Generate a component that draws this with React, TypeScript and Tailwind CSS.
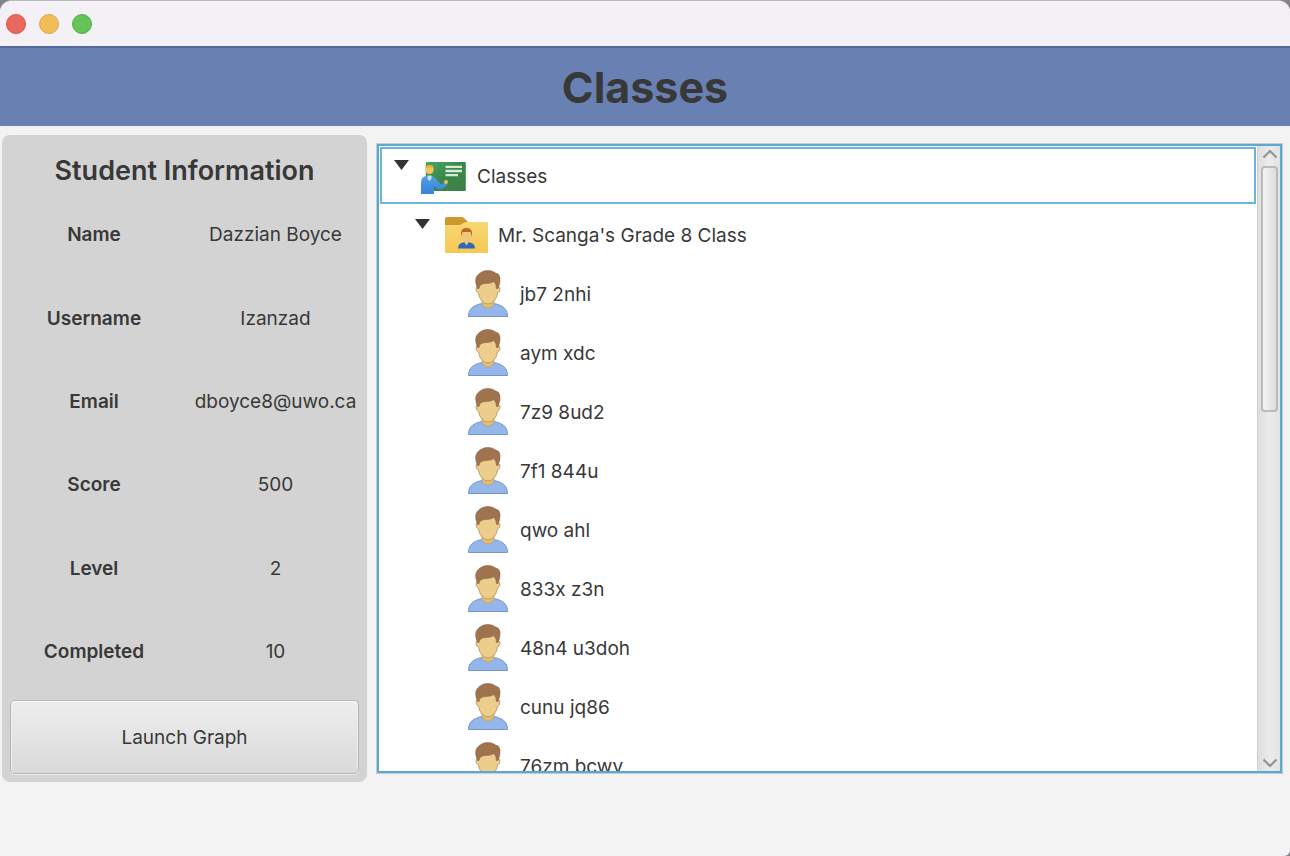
import { useRef, useState } from "react";

const details = [
  ["Name", "Dazzian Boyce"],
  ["Username", "Izanzad"],
  ["Email", "dboyce8@uwo.ca"],
  ["Score", "500"],
  ["Level", "2"],
  ["Completed", "10"],
];

const students = [
  "jb7 2nhi",
  "aym xdc",
  "7z9 8ud2",
  "7f1 844u",
  "qwo ahl",
  "833x z3n",
  "48n4 u3doh",
  "cunu jq86",
  "76zm bcwv",
];

function TeacherIcon() {
  return (
    <svg width="48" height="48" viewBox="0 0 48 48" className="shrink-0" aria-hidden="true">
      <defs>
        <linearGradient id="board" x1="0" y1="0" x2="1" y2="1">
          <stop offset="0" stopColor="#4aa766" />
          <stop offset="0.5" stopColor="#3b8649" />
          <stop offset="1" stopColor="#3d8047" />
        </linearGradient>
        <linearGradient id="shirt" x1="0" y1="0" x2="0" y2="1">
          <stop offset="0" stopColor="#4e9fdf" />
          <stop offset="1" stopColor="#3b82dc" />
        </linearGradient>
      </defs>
      <rect x="4.800" y="10" width="40" height="29" rx="1" fill="url(#board)" />
      <path d="M24.500 14.900h16.500M24.500 19h16.500M24.500 23.100h12.500" stroke="#d3ebd8" strokeWidth="2.400" />
      <path d="M0 42V31q0-7 6-7h4q3 0 6 4l4.500 4.500 4-2.500 2 3-5.500 4q-3 1-6-1l-2-2v8Z" fill="url(#shirt)" />
      <path d="M6.500 23.500h4v3.500l-2 2-2-2Z" fill="#c7def0" />
      <circle cx="8.500" cy="17.800" r="4.200" fill="#f2c65d" />
      <path d="M4.300 16.500q0-3.500 4.200-3.500t4.200 3.500q-4-2-8.400 0" fill="#e9ae3b" />
      <circle cx="25" cy="30" r="2" fill="#e5bd59" />
    </svg>
  );
}

function ClassFolderIcon() {
  return (
    <svg width="48" height="48" viewBox="0 0 48 48" className="shrink-0" aria-hidden="true">
      <defs>
        <linearGradient id="folder" x1="0" y1="0" x2="0" y2="1">
          <stop offset="0" stopColor="#f8d775" />
          <stop offset="1" stopColor="#f5c852" />
        </linearGradient>
      </defs>
      <path d="M3 8q0-2 2-2h15q1 0 2 1l4 4-3 4H3Z" fill="#cd972f" />
      <path d="M3 14h13q3 0 4.500-1.500t3.500-1.500h21q1 0 1 1v29q0 1-1 1H4q-1 0-1-1Z" fill="url(#folder)" />
      <path d="M16 37.500q0-5 5-6l3.500-1 3.500 1q5 1 5 6Z" fill="#3167b8" />
      <path d="m21.500 30 3 4.500 3-4.500v-3h-6Z" fill="#efc67c" />
      <ellipse cx="24.500" cy="24.500" rx="4.800" ry="6" fill="#efc67c" />
      <path d="M19 26v-4.500q.5-4.500 5.500-4.500t5.500 4.500v4.500l-1.500-5h-8Z" fill="#bb6828" />
    </svg>
  );
}

function StudentIcon() {
  return (
    <svg width="48" height="48" viewBox="0 0 48 48" className="shrink-0" aria-hidden="true">
      <path d="M4.500 46.500q0-8 7-11 3-1.500 7-2h11q4 .5 7 2 7 3 7 11Z" fill="#95b6eb" stroke="#7595c9" />
      <path d="M18 29h12v5q-1.500 4-6 4t-6-4Z" fill="#e2bf75" stroke="#b8975c" strokeWidth="0.600" />
      <path d="M14.500 17q-3-.5-2.500 2.500.5 3 2.500 3.500.5 5 3.500 8 2.500 3 6 3t6-3q3-3 3.500-8 2-.5 2.500-3.500.5-3-2.500-2.500L31 10H17Z" fill="#edcd8b" stroke="#b39057" strokeWidth="0.800" />
      <path d="M13.500 18.500Q10 10 13 6q4-5.500 11-5.500 5 0 7.500 2.500 4 .5 4.500 5 .5 4.500-2 10.500h-1.500q0-4-2.500-7-3 2-8 2-6.500 0-7 5Z" fill="#a0734f" stroke="#8a6548" strokeWidth="0.600" />
    </svg>
  );
}

function Arrow({ open, label, onClick }: { open: boolean; label: string; onClick: () => void }) {
  return (
    <button type="button" aria-label={label} aria-expanded={open} onClick={onClick} className="mb-[22px] shrink-0">
      <svg width="15" height="10" viewBox="0 0 15 10" className={open ? "" : "-rotate-90"} aria-hidden="true">
        <path d="M0 0h15L7.500 10Z" fill="#333" />
      </svg>
    </button>
  );
}

export default function App() {
  const [rootOpen, setRootOpen] = useState(true);
  const [classOpen, setClassOpen] = useState(true);
  const list = useRef<HTMLUListElement>(null);
  const scroll = (top: number) => list.current?.scrollBy({ top });

  return (
    <div className="h-screen bg-[#87858a] font-['Inter','Liberation_Sans',sans-serif] text-[19px] text-[#383838]">
      <div className="flex h-full flex-col overflow-hidden rounded-t-xl rounded-br-md border-t border-[#b9b7bb] bg-[#f3f3f3]">
        <div className="flex h-[45px] shrink-0 items-center gap-[13px] bg-[#f3f0f6] px-[6px]">
          <button type="button" aria-label="Close" className="size-5 rounded-full border border-[#d7564e] bg-[#e9695f]" />
          <button type="button" aria-label="Minimize" className="size-5 rounded-full border border-[#dba748] bg-[#f1bd58]" />
          <button type="button" aria-label="Zoom" className="size-5 rounded-full border border-[#53ae49] bg-[#64c457]" />
        </div>
        <header className="flex h-20 shrink-0 items-center justify-center border-t-2 border-[#53699c] bg-[#6881b2]">
          <h1 className="text-[43px] font-bold">Classes</h1>
        </header>
        <main className="flex min-h-0 flex-1 gap-[9px] pt-[9px] pr-[7px] pb-[74px] pl-[2px]">
          <section className="flex w-[365px] shrink-0 flex-col rounded-lg bg-[#d3d3d3] px-2 pb-2">
            <h2 className="flex h-[59px] shrink-0 items-center justify-center pt-[14px] text-[27px] font-semibold whitespace-nowrap">
              Student Information
            </h2>
            <dl className="flex flex-1 flex-col">
              {details.map(([label, value]) => (
                <div key={label} className="flex flex-1 items-center text-center">
                  <dt className="w-[168px] shrink-0 font-semibold">{label}</dt>
                  <dd className="flex flex-1 justify-center whitespace-nowrap pl-[14px]">{value}</dd>
                </div>
              ))}
            </dl>
            <button
              type="button"
              className="mt-[6px] h-[74px] shrink-0 rounded-[5px] border border-[#b5b5b5] bg-linear-to-b from-[#eeeeee] to-[#d9d9d9] pt-[2px] shadow-[0_1px_0_#eeeeee,inset_0_1px_0_#ffffff,inset_1px_0_0_#eeeeee,inset_-1px_0_0_#eeeeee]"
            >
              Launch Graph
            </button>
          </section>
          <section className="mt-2 mb-2 flex min-w-0 flex-1 border border-[#c2ccd2] bg-white">
            <div className="flex min-w-0 flex-1 border-2 border-[#5ba9d3]">
              <ul ref={list} role="tree" aria-label="Classes" className="min-w-0 flex-1 overflow-y-auto pt-px pr-px pl-px [scrollbar-width:none]">
                <li
                  role="treeitem"
                  aria-expanded={rootOpen}
                  className="mb-px flex h-[57px] items-center border-2 border-[#6bb5da] pt-px pl-3"
                >
                  <Arrow open={rootOpen} label="Toggle classes" onClick={() => setRootOpen(!rootOpen)} />
                  <span className="flex items-center gap-2 pl-3">
                    <TeacherIcon />
                    <span className="pt-[3px]">Classes</span>
                  </span>
                </li>
                {rootOpen && (
                  <li role="treeitem" aria-expanded={classOpen} className="flex h-[59px] items-center pl-[35px]">
                    <Arrow open={classOpen} label="Toggle students" onClick={() => setClassOpen(!classOpen)} />
                    <span className="flex items-center gap-2 pl-3">
                      <ClassFolderIcon />
                      <span className="pt-[3px]">Mr. Scanga's Grade 8 Class</span>
                    </span>
                  </li>
                )}
                {rootOpen &&
                  classOpen &&
                  students.map((name) => (
                    <li key={name} role="treeitem" className="flex h-[59px] items-center gap-2 pl-[84px]">
                      <StudentIcon />
                      <span className="pt-[3px]">{name}</span>
                    </li>
                  ))}
              </ul>
              <div className="flex w-[23px] shrink-0 flex-col border-l border-[#cfcfcf] bg-linear-to-r from-[#dedede] via-[#ebebeb] to-[#e3e3e3]">
                <button type="button" aria-label="Scroll up" onClick={() => scroll(-59)} className="flex h-5 shrink-0 items-start justify-center pt-[3px] pl-px">
                  <svg width="16" height="10" viewBox="0 0 16 10" fill="none" aria-hidden="true">
                    <path d="m1.500 8.500 6.500-6.500 6.500 6.500" stroke="#949494" strokeWidth="2.200" />
                  </svg>
                </button>
                <div className="flex-1 pr-[2px] pl-[3px]">
                  <div className="h-[42%] rounded-[4px] border-2 border-[#bababa] bg-linear-to-r from-[#f5f5f5] to-[#dddddd]" />
                </div>
                <button type="button" aria-label="Scroll down" onClick={() => scroll(59)} className="flex h-5 shrink-0 items-end justify-center pb-[3px] pl-px">
                  <svg width="16" height="10" viewBox="0 0 16 10" fill="none" aria-hidden="true">
                    <path d="m1.500 1.500 6.500 6.500 6.500-6.500" stroke="#949494" strokeWidth="2.200" />
                  </svg>
                </button>
              </div>
            </div>
          </section>
        </main>
      </div>
    </div>
  );
}
